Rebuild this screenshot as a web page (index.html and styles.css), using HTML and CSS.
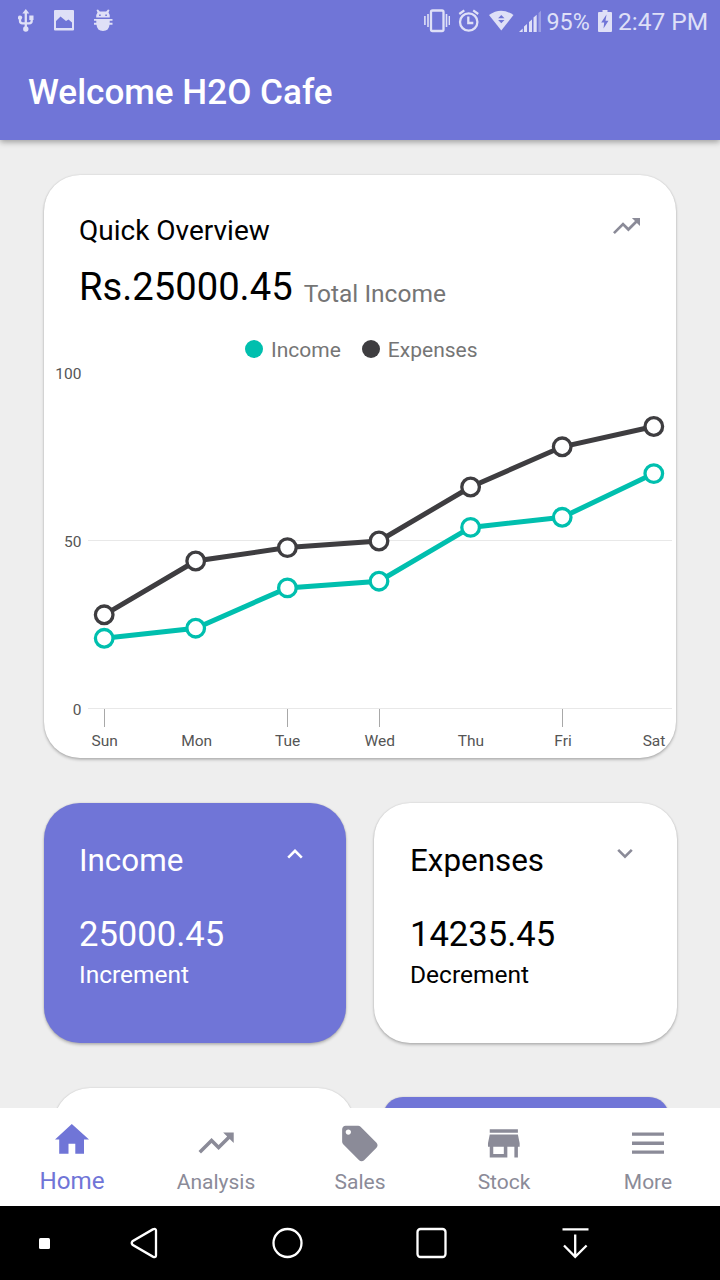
FILE: index.html
```html
<!DOCTYPE html>
<html lang="en">
<head>
<meta charset="utf-8">
<title>Welcome H2O Cafe</title>
<link rel="stylesheet" href="styles.css">
</head>
<body>
<div class="screen">
  <header class="header">
    <div class="status">
      <div class="status-left">
        <svg width="16" height="44" viewBox="18 0 16 44"><path class="line2" d="M25.8 13v16M20 19v2q0 2.300 2.500 2.300h6.700q2.500 0 2.500-2.300V17.500"/><path class="tint" d="M25.800 9l3.500 4.500h-7zM29.300 15.500h4.200v4.500h-4.200z"/><circle class="tint" cx="20" cy="17.600" r="2.200"/><circle class="tint" cx="25.800" cy="29" r="2.700"/></svg>
        <svg width="20" height="44" viewBox="54 0 20 44"><path class="tint" fill-rule="evenodd" d="M55 10h18q1 0 1 1V29.500q0 1-1 1h-18q-1 0-1-1V11q0-1 1-1zM56 28h16v-5.500l-3.500-3-2.500 1.500-5.500-4.500-4.500 4.500z"/></svg>
        <svg width="20" height="44" viewBox="93.500 0 20 44"><path class="tint" fill-rule="evenodd" d="M96 10l1.500-.5 1.800 2h6.400l1.800-2 1.500.5-1 2.500q1.300 1.500 1.300 5h-13.600q0-3.500 1.300-5zM98.600 14.500v1.500h1.600v-1.500zM104.800 14.500v1.500h1.600v-1.500z"/><path class="tint" d="M93 19h19v1.800h-2.800v2h2.800v2h-3q-.5 6.200-6.500 6.200t-6.500-6.200h-3v-2h2.800v-2h-2.800z"/></svg>
      </div>
      <div class="status-right">
        <svg width="26" height="44" viewBox="424 0 26 44"><rect class="line2" x="431" y="10.500" width="12.500" height="20.500" rx="1.500"/><path class="line15" d="M424.900 16v9M428 14v13M446.500 14v13M449.400 16v9"/></svg>
        <svg class="i-alarm" width="22" height="44" viewBox="458 0 22 44"><circle class="line2" cx="468.700" cy="22" r="8.700"/><path class="line2" d="M468.300 16.500v6.500h5M459.300 14l5-3.600M478.200 14l-5-3.600"/></svg>
        <svg class="i-wifi" width="25" height="44" viewBox="489 0 25 44"><path class="tint" d="M489 15q12-8.500 24.500 0L501.300 30.500z"/><path class="cut" d="M501.300 15l3.200 3.200h-6.400zM501.300 23.200l3.200-3.200h-6.400z"/></svg>
        <svg class="i-signal" width="22" height="44" viewBox="518.500 0 22 44"><path class="tint" d="M518.500 32l3.700-3.600v3.600zM523.500 26.500l3-2.500v8h-3zM528.500 22l3-2.500v12.500h-3zM533 17.500l3.200-2.800v17.300h-3.200z"/><path class="faint" d="M538 13l2.500-2.200v21.200h-2.500z"/></svg>
        <span class="status-text pct">95%</span>
        <svg class="i-batt" width="14" height="44" viewBox="598 0 14 44"><path class="tint" d="M599 12h3.500v-2h5v2h3.500q1 0 1 1v18q0 1-1 1h-12q-1 0-1-1v-18q0-1 1-1z"/><path class="cut" d="M606.500 14.500l-5.300 8h3l-.7 6 5-7.800h-3z"/></svg>
        <span class="status-text time">2:47 PM</span>
      </div>
    </div>
    <h1 class="title">Welcome H2O Cafe</h1>
  </header>

  <main class="content">
    <section class="card overview">
      <div class="overview-head">
        <div>
          <h2 class="overview-title">Quick Overview</h2>
          <div class="total"><span class="total-value">Rs.25000.45</span><span class="total-label">Total Income</span></div>
        </div>
        <svg class="i-trend" width="27" height="18" viewBox="2 6 20 12"><path class="gray" d="M16 6l2.290 2.290-4.880 4.880-4-4L2 16.590 3.410 18l6-6 4 4 6.300-6.290L22 12V6z"/></svg>
      </div>
      <div class="legend">
        <span class="dot teal"></span><span class="legend-text first">Income</span>
        <span class="dot dark"></span><span class="legend-text">Expenses</span>
      </div>
      <svg class="chart" width="632" height="394" viewBox="44 364 632 394">
        <path class="grid" d="M88 540.500H672M88 708.500H672"/>
        <path class="tick" d="M104.500 709v18M287.500 709v18M379.500 709v18M562.500 709v18"/>
        <g class="axis y"><text x="81.500" y="379">100</text><text x="81.500" y="547">50</text><text x="81.500" y="715">0</text></g>
        <g class="axis x"><text x="104.700" y="745.500">Sun</text><text x="196.700" y="745.500">Mon</text><text x="287.700" y="745.500">Tue</text><text x="379.700" y="745.500">Wed</text><text x="471" y="745.500">Thu</text><text x="563" y="745.500">Fri</text><text x="654" y="745.500">Sat</text></g>
        <g class="series-dark"><polyline points="104.200,614.800 195.700,561 287.400,547.600 379,541 470.600,487 562.200,446.800 653.800,426.500"/><circle cx="104.200" cy="614.800" r="8.800"/><circle cx="195.700" cy="561" r="8.800"/><circle cx="287.400" cy="547.600" r="8.800"/><circle cx="379" cy="541" r="8.800"/><circle cx="470.600" cy="487" r="8.800"/><circle cx="562.200" cy="446.800" r="8.800"/><circle cx="653.800" cy="426.500" r="8.800"/></g>
        <g class="series-teal"><polyline points="104.200,638.300 195.700,628.200 287.400,587.900 379,581.200 470.600,527.400 562.200,517.300 653.800,473.600"/><circle cx="104.200" cy="638.300" r="8.800"/><circle cx="195.700" cy="628.200" r="8.800"/><circle cx="287.400" cy="587.900" r="8.800"/><circle cx="379" cy="581.200" r="8.800"/><circle cx="470.600" cy="527.400" r="8.800"/><circle cx="562.200" cy="517.300" r="8.800"/><circle cx="653.800" cy="473.600" r="8.800"/></g>
      </svg>
    </section>

    <div class="row">
      <section class="card stat purple">
        <div class="stat-head"><h3 class="stat-title">Income</h3><svg class="i-chev" width="16" height="10" viewBox="0 0 16 10"><path class="chev-up" d="M1.200 8.600L8 1.800l6.800 6.800"/></svg></div>
        <div class="stat-value">25000.45</div>
        <div class="stat-label">Increment</div>
      </section>
      <section class="card stat wide">
        <div class="stat-head"><h3 class="stat-title">Expenses</h3><svg class="i-chev" width="16" height="10" viewBox="0 0 16 10"><path class="chev-down" d="M1.200 .9L8 7.700l6.800-6.800"/></svg></div>
        <div class="stat-value">14235.45</div>
        <div class="stat-label">Decrement</div>
      </section>
    </div>

    <div class="row next">
      <section class="card peek"></section>
      <section class="card peek small purple"></section>
    </div>
  </main>

  <nav class="tabs">
    <a class="tab active"><svg width="36" height="50" viewBox="54 1108 36 50"><path class="purple-fill" d="M71.800 1124L89 1139.400h-5v14.300h-8.700v-10h-6.800v10h-9.300v-14.300H55z"/></svg><span>Home</span></a>
    <a class="tab"><svg width="36" height="50" viewBox="198 1108 36 50"><path class="gray" transform="translate(195 1121.900) scale(1.760)" d="M16 6l2.290 2.290-4.880 4.880-4-4L2 16.590 3.410 18l6-6 4 4 6.300-6.290L22 12V6z"/></svg><span>Analysis</span></a>
    <a class="tab"><svg width="36" height="54" viewBox="342 1108 36 54"><path class="gray" fill-rule="evenodd" transform="translate(338.600 1122.300) scale(1.770)" d="M21.410 11.580l-9-9C12.050 2.220 11.550 2 11 2H4c-1.100 0-2 .9-2 2v7c0 .55.220 1.050.590 1.420l9 9c.36.360.860.580 1.410.580.550 0 1.050-.220 1.410-.590l7-7c.370-.360.590-.860.590-1.410 0-.55-.230-1.060-.590-1.420zM5.500 7C4.670 7 4 6.330 4 5.500S4.670 4 5.500 4 7 4.670 7 5.500 6.330 7 5.500 7z"/></svg><span class="tag-label">Sales</span></a>
    <a class="tab"><svg width="36" height="50" viewBox="486 1108 36 50"><path class="gray" transform="translate(482.700 1122.200) scale(1.760)" d="M20 4H4v2h16V4zm1 10v-2l-1-5H4l-1 5v2h1v6h10v-6h4v6h2v-6h1zm-9 4H6v-4h6v4z"/></svg><span>Stock</span></a>
    <a class="tab"><svg width="36" height="50" viewBox="630 1108 36 50"><path class="gray" d="M632 1132.500h32v3.300h-32zM632 1141.600h32v3.300h-32zM632 1150.400h32v3.400h-32z"/></svg><span>More</span></a>
  </nav>

  <footer class="system">
    <svg width="720" height="74" viewBox="0 1206 720 74"><rect class="white" x="39" y="1238" width="11" height="11" rx="1.500"/><path class="sys" d="M132.500 1241.200Q131 1243 132.500 1244.800L152.800 1256.600Q156 1258 156 1255.500V1230.500Q156 1228 152.800 1229.400z"/><circle class="sys" cx="287.500" cy="1243" r="14"/><rect class="sys" x="417.500" y="1229" width="28" height="28" rx="3"/><path class="sys" d="M562.500 1229.300H588.500M575.200 1234.500V1256.500M564 1245.500L575.200 1256.800L586.600 1245.500"/></svg>
  </footer>
</div>
</body>
</html>
```

FILE: styles.css
```css
* { box-sizing: border-box; }
body { margin: 0; font-family: Roboto, sans-serif; background: #eee; }
h1, h2, h3 { margin: 0; font-weight: 400; }
svg { display: block; flex: none; }
.screen { width: 720px; height: 1280px; display: flex; flex-direction: column; overflow: hidden; }

.header { height: 140px; flex: none; background: #7075d7; box-shadow: 0 2px 6px rgba(0,0,0,.35); z-index: 1; }
.status { height: 44px; display: flex; justify-content: space-between; padding: 0 12px 0 18px; }
.status-left { display: flex; gap: 20px; }
.status-right { display: flex; }
.status-text { font-size: 24.500px; line-height: 44px; color: #dfe0f7; white-space: nowrap; }
.status-text.pct { width: 44px; margin-left: 6px; font-size: 23.300px; }
.time { width: 90px; margin-left: 6px; }
.i-alarm { margin-left: 8px; }
.i-wifi { margin-left: 9px; }
.i-signal { margin-left: 4.500px; }
.i-batt { margin-left: 7.500px; }
.tint { fill: #dfe0f7; }
.faint { fill: #9a9de3; }
.cut { fill: #7075d7; }
.line2 { fill: none; stroke: #dfe0f7; stroke-width: 2.300; }
.line15 { fill: none; stroke: #dfe0f7; stroke-width: 1.600; }
.title { font-size: 35.100px; font-weight: 500; line-height: 97px; padding-left: 28px; color: #fff; white-space: nowrap; }

.content { height: 968px; flex: none; overflow: hidden; padding: 35px 43px 0 44px; }
.card { background: #fff; border-radius: 36px; box-shadow: 0 2px 3px rgba(0,0,0,.22), 0 0 2px rgba(0,0,0,.16); }
.purple { background: #7075d7; color: #fff; }
.overview { width: 632px; height: 583px; overflow: hidden; }
.overview-head { height: 156px; display: flex; justify-content: space-between; padding: 38px 36px 0 35px; }
.overview-title { font-size: 28px; line-height: 35px; white-space: nowrap; }
.total { display: flex; align-items: flex-start; gap: 11px; line-height: 46px; margin-top: 16px; white-space: nowrap; }
.total-value { font-size: 38.200px; }
.total-label { font-size: 24.500px; color: #757575; padding-top: 7px; }
.i-trend { margin-top: 4px; }
.legend { height: 33px; display: flex; align-items: center; padding: 4px 0 0 201px; }
.dot { width: 18px; height: 18px; border-radius: 50%; margin: -1px 8px 0 0; }
.teal { background: #00bfae; }
.dark { background: #3e3d40; }
.legend-text { font-size: 21px; color: #757575; padding-top: 1px; }
.first { margin-right: 21px; }
.grid { stroke: #e8e8e8; }
.tick { stroke: #a8a8a8; }
.axis { font-size: 15.500px; fill: #555; }
.y { text-anchor: end; }
.x { text-anchor: middle; }
.series-dark { fill: none; stroke: #3e3d40; }
.series-teal { fill: none; stroke: #00bfae; }
.chart polyline { stroke-width: 5; }
.chart circle { fill: #fff; stroke-width: 3.300; }

.row { display: flex; gap: 28px; margin-top: 45px; }
.stat { width: 302px; height: 240px; padding: 36px 43px 0 35px; }
.wide { width: 303px; padding-right: 44px; padding-left: 36px; }
.stat-head { display: flex; justify-content: space-between; }
.stat-title { font-size: 31.400px; line-height: 44px; }
.stat-value { font-size: 34.600px; line-height: 44px; margin-top: 29px; }
.stat-label { font-size: 24.500px; line-height: 32px; margin-top: 3px; }
.i-chev { margin-top: 10px; }
.chev-up { fill: none; stroke: #fff; stroke-width: 2.600; }
.chev-down { fill: none; stroke: #8b8b98; stroke-width: 2.600; }
.next { padding-left: 10px; }
.peek { width: 300px; height: 240px; }
.small { width: 286px; margin: 9px 0 0 1px; border-radius: 20px; }

.tabs { height: 98px; flex: none; display: flex; background: #fff; }
.tab { width: 144px; display: flex; flex-direction: column; align-items: center; color: #8b8b98; font-size: 21px; line-height: 48px; }
.tag-label { margin-top: -4px; }
.active { color: #7075d7; font-size: 24.200px; line-height: 46px; }
.gray { fill: #8b8b98; }
.purple-fill { fill: #7075d7; }
.system { height: 74px; flex: none; background: #000; }
.white { fill: #fff; }
.sys { fill: none; stroke: #fff; stroke-width: 2.300; }
```
